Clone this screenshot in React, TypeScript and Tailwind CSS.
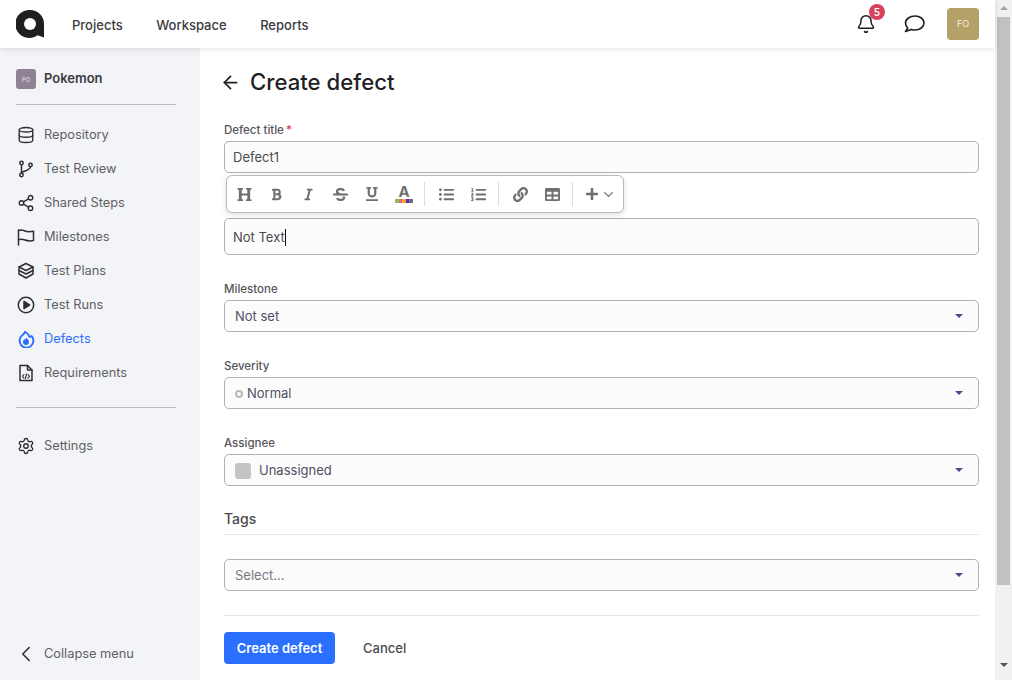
import { ArrowLeft, Bell, ChevronDown, ChevronLeft, Database, Settings, Share2 } from 'lucide-react'
import { FaBold, FaHeading, FaItalic, FaLink, FaListOl, FaListUl, FaPlus, FaStrikethrough, FaTable, FaUnderline } from 'react-icons/fa'
import type { ReactNode } from 'react'

const FONT = 'font-["Inter","Noto_Sans",sans-serif]'

function Logo() {
  return (
    <svg width="28" height="28" viewBox="0 0 28 28">
      <path d="M14 0a14 14 0 0 1 14 14v13.500l-6.500-2.200A14 14 0 1 1 14 0z" fill="#1f1f1f" />
      <circle cx="14" cy="14" r="6" fill="#fff" />
    </svg>
  )
}

function Glyph({ children }: { children: ReactNode }) {
  return (
    <svg width="18" height="18" viewBox="0 0 18 18" fill="none" stroke="currentColor" strokeWidth="1.500" strokeLinejoin="round" strokeLinecap="round">
      {children}
    </svg>
  )
}

function BranchIcon() {
  return (
    <Glyph>
      <circle cx="4.500" cy="3" r="1.700" />
      <circle cx="4.500" cy="15" r="1.700" />
      <circle cx="13.500" cy="5" r="1.700" />
      <path d="M4.500 4.700v8.600" />
      <path d="M13.500 6.700c0 3-4 3.500-9 5.800" />
    </Glyph>
  )
}

function FlagIcon() {
  return (
    <Glyph>
      <path d="M1.500 2v15" />
      <path d="M1.500 2.500c2-.8 4-.5 6.500.5s4 1 8.500.2v9.300c-4 .8-6 .5-8.500-.5s-4.500-1-6.500-.3" />
    </Glyph>
  )
}

function PlansIcon() {
  return (
    <Glyph>
      <path d="M9 1.500l7 3.500-7 3.500-7-3.500z" />
      <path d="M2 5v3.500l7 3.500 7-3.500V5" />
      <path d="M2 8.500V12l7 4 7-4V8.500" />
    </Glyph>
  )
}

function PlayIcon() {
  return (
    <Glyph>
      <circle cx="9" cy="9" r="7.700" />
      <path d="M7 5.500l5.500 3.500L7 12.500z" fill="currentColor" />
    </Glyph>
  )
}

function DefectIcon() {
  return (
    <svg width="18" height="18" viewBox="0 0 18 18" fill="none">
      <path d="M8 1.800c-.5 2-2 2.700-3 3.700a6.900 6.900 0 1 0 9.500.5c-.8.8-1.500 1-2.200.8C11.800 4.800 10 3 8 1.800z" stroke="currentColor" strokeWidth="1.900" strokeLinejoin="round" />
      <path d="M9.200 7.500c1 1.500 2.800 2.300 2.800 4.500a3 3 0 0 1-6 0c0-1.500 1-2.200 1.600-2.700.6.300 1.300-.2 1.600-1.800z" fill="currentColor" />
    </svg>
  )
}

function RequirementsIcon() {
  return (
    <Glyph>
      <path d="M3 1.500h7.500L15 6v10.500H3z" />
      <path d="M10.500 1.500V6H15" />
      <g strokeWidth="1.100">
        <path d="M7 10.500l-1.500 1.800L7 14.100" />
        <path d="M11 10.500l1.500 1.800-1.500 1.800" />
        <path d="M9.600 10l-1.200 4.500" />
      </g>
    </Glyph>
  )
}

function MessageIcon() {
  return (
    <svg width="21" height="18" viewBox="0 0 21 18" fill="none" stroke="currentColor" strokeWidth="1.600" strokeLinejoin="round">
      <path d="M11 1c5 0 9 3 9 7s-4 7-9 7c-1.300 0-2.500-.2-3.600-.6L1.500 16.500 3.800 13C2.300 11.800 1.500 10 1.500 8c0-4 4.500-7 9.500-7z" />
    </svg>
  )
}

const NAV = [
  { label: 'Repository', icon: <Database size={18} strokeWidth={1.800} /> },
  { label: 'Test Review', icon: <BranchIcon /> },
  { label: 'Shared Steps', icon: <Share2 size={18} strokeWidth={1.800} /> },
  { label: 'Milestones', icon: <FlagIcon /> },
  { label: 'Test Plans', icon: <PlansIcon /> },
  { label: 'Test Runs', icon: <PlayIcon /> },
  { label: 'Defects', icon: <DefectIcon />, active: true },
  { label: 'Requirements', icon: <RequirementsIcon /> },
]

function NavItem({ icon, label, active }: { icon: ReactNode; label: string; active?: boolean }) {
  return (
    <div className={`flex h-[34px] items-center pl-[17px] text-[12.800px] ${active ? 'text-[#2b6fff]' : 'text-[#5f5f65]'}`}>
      <span className={`flex w-[27px] items-center ${active ? 'text-[#2b6fff]' : 'text-[#2f2f33]'}`}>{icon}</span>
      {label}
    </div>
  )
}

function Sidebar() {
  return (
    <aside className="flex w-[200px] shrink-0 flex-col bg-[#f3f4f7] pt-[21px]">
      <div className="ml-4 flex h-5 items-center gap-2 text-[13px] font-semibold text-[#3a3a3f]">
        <span className="flex h-5 w-5 items-center justify-center rounded-[3px] bg-[#8f8292] text-[6px] font-normal text-[#e8e4ea]">PO</span>
        Pokemon
      </div>
      <div className="mb-[13px] ml-4 mr-6 mt-[15px] h-px bg-[#bdbdc2]" />
      {NAV.map((n) => (
        <NavItem key={n.label} icon={n.icon} label={n.label} active={n.active} />
      ))}
      <div className="mb-[21px] ml-4 mr-6 mt-[17px] h-px bg-[#bdbdc2]" />
      <NavItem icon={<Settings size={18} strokeWidth={1.800} />} label="Settings" />
      <div className="mb-[9px] mt-auto">
        <NavItem icon={<ChevronLeft size={26} strokeWidth={1.500} className="-ml-1" />} label="Collapse menu" />
      </div>
    </aside>
  )
}

function Caret() {
  return <span className="h-0 w-0 border-x-[4px] border-t-[4px] border-x-transparent border-t-[#4b4a8c]" />
}

function SelectBox({ children, muted }: { children: ReactNode; muted?: boolean }) {
  return (
    <div className={`flex h-8 items-center justify-between rounded-[5px] border border-[#b1b1b1] bg-[#fcfcfc] pl-[10px] pr-[15px] text-[13px] ${muted ? 'text-[#77777f]' : 'text-[#4f4f63]'}`}>
      <span className="flex items-center pt-[2px]">{children}</span>
      <Caret />
    </div>
  )
}

function Label({ children, className }: { children: ReactNode; className?: string }) {
  return <div className={`text-[11.500px] font-medium leading-[14px] text-[#55555a] ${className ?? ''}`}>{children}</div>
}

function Sep() {
  return <span className="ml-1 mr-[5px] h-6 w-px bg-[#dcdcdc]" />
}

function ToolBtn({ children }: { children: ReactNode }) {
  return <span className="flex h-6 w-8 items-center justify-center text-[#6f6f6f]">{children}</span>
}

function Toolbar() {
  return (
    <div className="absolute left-[226px] top-[175px] flex h-[38px] w-[398px] items-center rounded-[6px] border border-[#b8b8b8] bg-white pl-px shadow-[0_2px_6px_rgba(0,0,0,0.12)]">
      <ToolBtn><FaHeading size={15} /></ToolBtn>
      <ToolBtn><FaBold size={13} /></ToolBtn>
      <ToolBtn><FaItalic size={13} /></ToolBtn>
      <ToolBtn><FaStrikethrough size={15} /></ToolBtn>
      <ToolBtn><FaUnderline size={14} /></ToolBtn>
      <span className="flex h-6 w-8 flex-col items-center justify-center">
        <span className="text-[15px] font-bold leading-[13px] text-[#6f6f6f]">A</span>
        <span className="mt-px flex h-1 w-[18px]">
          <span className="flex-1 bg-[#8bc34a]" />
          <span className="flex-1 bg-[#f06292]" />
          <span className="flex-1 bg-[#f5a623]" />
          <span className="flex-1 bg-[#6a1be0]" />
          <span className="flex-1 bg-[#6f6f6f]" />
        </span>
      </span>
      <Sep />
      <ToolBtn><FaListUl size={15} /></ToolBtn>
      <ToolBtn><FaListOl size={15} /></ToolBtn>
      <Sep />
      <ToolBtn><FaLink size={15} /></ToolBtn>
      <ToolBtn><FaTable size={15} /></ToolBtn>
      <Sep />
      <span className="flex items-center gap-[2px] pl-[7px] text-[#6f6f6f]">
        <FaPlus size={14} />
        <ChevronDown size={15} strokeWidth={2} />
      </span>
    </div>
  )
}

function Header() {
  return (
    <header className="relative z-10 flex h-12 shrink-0 items-center bg-white pl-4 pr-4 shadow-[0_1px_6px_rgba(0,0,0,0.12)]">
      <Logo />
      <nav className="ml-7 mt-1 flex gap-[33.500px] text-[13px] font-medium text-[#3a3a3f]">
        <span>Projects</span>
        <span>Workspace</span>
        <span>Reports</span>
      </nav>
      <div className="ml-auto flex items-center">
        <span className="relative text-[#1f1f1f]">
          <Bell size={20} strokeWidth={1.800} />
          <span className="absolute -right-[9px] -top-[10px] flex h-4 w-4 items-center justify-center rounded-full bg-[#d6435b] text-[10px] font-semibold text-white">5</span>
        </span>
        <span className="ml-[28px] text-[#1f1f1f]"><MessageIcon /></span>
        <span className="ml-[22px] flex h-8 w-8 items-center justify-center rounded-[4px] bg-[#b3a167] text-[9px] text-[#f2eee0]">FO</span>
      </div>
    </header>
  )
}

function Scrollbar() {
  return (
    <div className="flex w-[17px] shrink-0 flex-col items-center bg-[#f1f1f1]">
      <span className="mt-[6px] h-0 w-0 border-x-[4px] border-b-[4px] border-x-transparent border-b-[#a3a3a3]" />
      <span className="mt-[7px] h-[568px] w-[13px] bg-[#c1c1c1]" />
      <span className="mt-[78px] h-0 w-0 border-x-[4px] border-t-[4px] border-x-transparent border-t-[#505050]" />
    </div>
  )
}

export default function App() {
  return (
    <div className={`relative flex h-[680px] w-[1012px] overflow-hidden bg-white ${FONT}`}>
      <div className="flex w-[995px] shrink-0 flex-col">
        <Header />
        <div className="flex min-h-0 flex-1">
          <Sidebar />
          <main className="flex-1 pl-6 pr-4 pt-[18px]">
            <div className="flex h-8 items-center text-[#1f1f24]">
              <ArrowLeft size={21} strokeWidth={2} className="-ml-1" />
              <h1 className="ml-[9px] text-[22.200px] font-medium">Create defect</h1>
            </div>
            <Label className="mb-[4px] mt-[25px]">
              Defect title<span className="ml-0.5 text-[#e0304f]">*</span>
            </Label>
            <div className="flex h-8 items-center rounded-[5px] border border-[#b1b1b1] bg-[#fcfcfc] pl-2 pt-[2px] text-[13px] text-[#4a4a4f]">Defect1</div>
            <Label className="mb-[5px] mt-[26px] pl-[3px]">Description</Label>
            <div className="flex h-[37px] items-center rounded-[5px] border border-[#b1b1b1] bg-[#fcfcfc] pl-2 pt-[2px] text-[13px] text-[#4a4a4f]">
              Not Text<span className="h-[17px] w-px bg-[#111]" />
            </div>
            <Label className="mb-[4px] mt-[27px]">Milestone</Label>
            <SelectBox>Not set</SelectBox>
            <Label className="mb-[4px] mt-[27px]">Severity</Label>
            <SelectBox>
              <span className="mr-[4px] h-2 w-2 rounded-full border-2 border-[#b9b9b9]" />
              Normal
            </SelectBox>
            <Label className="mb-[4px] mt-[27px]">Assignee</Label>
            <SelectBox>
              <span className="mr-2 h-4 w-4 rounded-[3px] bg-[#c4c4c4]" />
              Unassigned
            </SelectBox>
            <div className="mt-[23px] border-b border-[#e6e6e6] pb-[6px] text-[14px] font-medium leading-[19px] text-[#4a4a4f]">Tags</div>
            <div className="mt-[24px]">
              <SelectBox muted>Select...</SelectBox>
            </div>
            <div className="mt-[24px] h-px bg-[#e6e6e6]" />
            <div className="mt-4 flex items-center">
              <button type="button" className="h-8 w-[111px] rounded-[4px] bg-[#2b6fff] pt-[2px] text-[13px] font-semibold text-white">Create defect</button>
              <button type="button" className="ml-7 h-8 pt-[2px] text-[13px] font-medium text-[#4a4a4f]">Cancel</button>
            </div>
          </main>
        </div>
      </div>
      <Scrollbar />
      <Toolbar />
    </div>
  )
}
